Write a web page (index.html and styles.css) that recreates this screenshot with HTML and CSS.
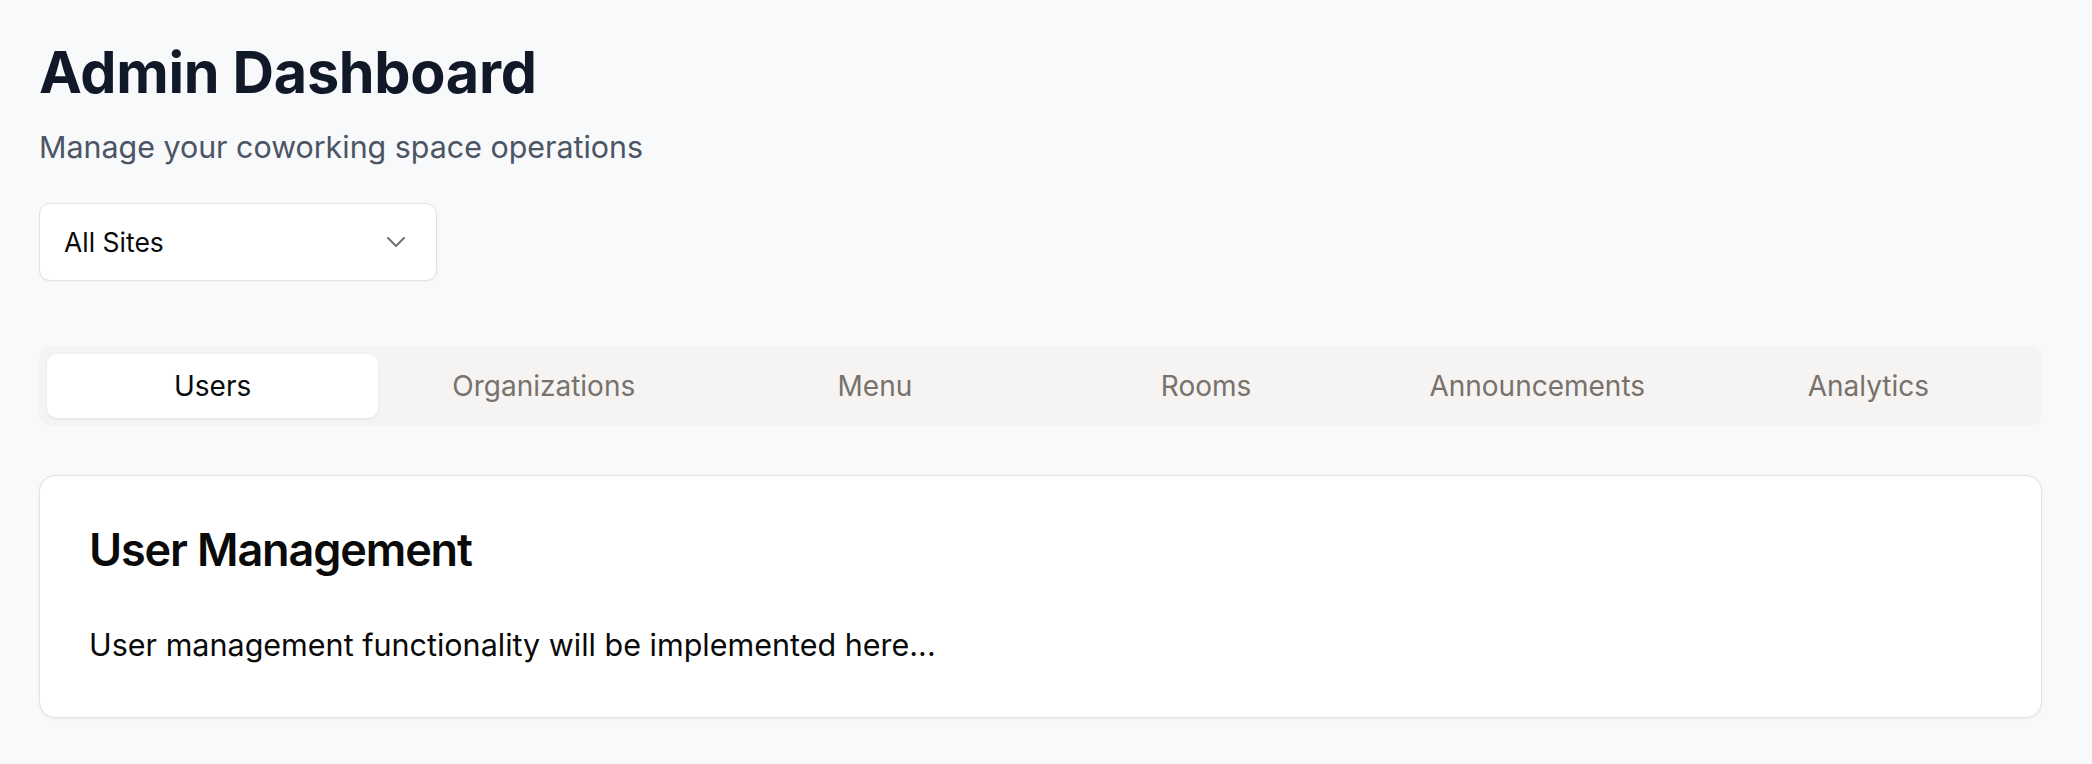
FILE: index.html
```html
<!DOCTYPE html>
<html lang="en">
<head>
<meta charset="utf-8">
<title>Admin Dashboard</title>
<link rel="stylesheet" href="styles.css">
</head>
<body>
<main class="page">
  <header class="header">
    <h1 class="title">Admin Dashboard</h1>
    <p class="subtitle">Manage your coworking space operations</p>
  </header>

  <div class="select">
    <span class="select-value">All Sites</span>
    <svg class="chevron" width="20" height="12" viewBox="0 0 20 12" aria-hidden="true">
      <path d="M2 2 L10 10 L18 2" fill="none" stroke="#737373" stroke-width="2" stroke-linecap="round" stroke-linejoin="round"/>
    </svg>
  </div>

  <nav class="tabs">
    <div class="tab active">Users</div>
    <div class="tab">Organizations</div>
    <div class="tab">Menu</div>
    <div class="tab">Rooms</div>
    <div class="tab">Announcements</div>
    <div class="tab">Analytics</div>
  </nav>

  <section class="card">
    <h2 class="card-title">User Management</h2>
    <p class="card-text">User management functionality will be implemented here...</p>
  </section>
</main>
</body>
</html>
```

FILE: styles.css
```css
* {
  box-sizing: border-box;
}

html, body {
  margin: 0;
  padding: 0;
  background: #f8f9fb;
}

body {
  font-family: Inter, "Noto Sans", "Liberation Sans", sans-serif;
  color: #0a0a0a;
}

.page {
  padding: 37px 50px 40px 39px;
  display: flex;
  flex-direction: column;
}

.header {
  display: flex;
  flex-direction: column;
}

.title {
  margin: 0;
  font-size: 57.5px;
  line-height: 70px;
  font-weight: 700;
  color: #111827;
  letter-spacing: -0.005em;
}

.subtitle {
  margin: 22px 0 0;
  font-size: 30.4px;
  line-height: 36px;
  font-weight: 400;
  color: #4b5563;
}

.select {
  margin-top: 38px;
  width: 398px;
  height: 78px;
  background: #ffffff;
  border: 1.5px solid #e4e2df;
  border-radius: 11px;
  box-shadow: 0 1px 2px rgba(0, 0, 0, 0.04);
  display: flex;
  align-items: center;
  justify-content: space-between;
  padding: 0 30px 0 24px;
}

.select-value {
  font-size: 26.5px;
  line-height: 26px;
  color: #0a0a0a;
}

.chevron {
  display: block;
}

.tabs {
  margin-top: 65px;
  height: 80px;
  background: #f5f4f2;
  border-radius: 12px;
  padding: 8px;
  display: grid;
  grid-template-columns: repeat(6, 1fr);
}

.tab {
  display: flex;
  align-items: center;
  justify-content: center;
  border-radius: 10px;
  font-size: 28px;
  line-height: 28px;
  font-weight: 400;
  color: #78716c;
}

.tab.active {
  background: #ffffff;
  color: #0a0a0a;
  box-shadow: 0 1px 3px rgba(0, 0, 0, 0.08);
}

.card {
  margin-top: 49px;
  background: #ffffff;
  border: 1.5px solid #e4e2df;
  border-radius: 16px;
  box-shadow: 0 1px 3px rgba(0, 0, 0, 0.06);
  padding: 47px 51px 52px 49px;
}

.card-title {
  margin: 0;
  font-size: 45px;
  line-height: 54px;
  font-weight: 600;
  letter-spacing: -0.025em;
  color: #0a0a0a;
}

.card-text {
  margin: 48px 0 0;
  font-size: 30.5px;
  line-height: 40px;
  color: #0a0a0a;
}
```
